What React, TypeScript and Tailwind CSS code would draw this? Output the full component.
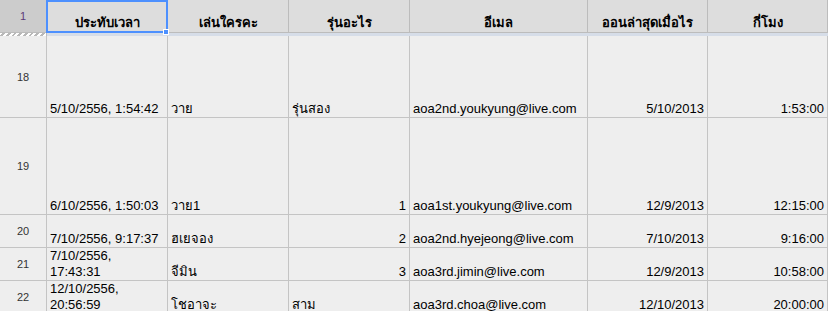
type Cell = { text: string; right?: boolean };

const widths = ['w-[121px]', 'w-[121px]', 'w-[121px]', 'w-[178px]', 'w-[120px]', 'w-[120px]'];

const headers = ['ประทับเวลา', 'เล่นใครคะ', 'รุ่นอะไร', 'อีเมล', 'ออนล่าสุดเมื่อไร', 'กี่โมง'];

const rows: { num: number; height: string; cells: Cell[] }[] = [
  {
    num: 18,
    height: 'h-[82px]',
    cells: [
      { text: '5/10/2556, 1:54:42' },
      { text: 'วาย' },
      { text: 'รุ่นสอง' },
      { text: 'aoa2nd.youkyung@live.com' },
      { text: '5/10/2013', right: true },
      { text: '1:53:00', right: true },
    ],
  },
  {
    num: 19,
    height: 'h-[97px]',
    cells: [
      { text: '6/10/2556, 1:50:03' },
      { text: 'วาย1' },
      { text: '1', right: true },
      { text: 'aoa1st.youkyung@live.com' },
      { text: '12/9/2013', right: true },
      { text: '12:15:00', right: true },
    ],
  },
  {
    num: 20,
    height: 'h-[33px]',
    cells: [
      { text: '7/10/2556, 9:17:37' },
      { text: 'ฮเยจอง' },
      { text: '2', right: true },
      { text: 'aoa2nd.hyejeong@live.com' },
      { text: '7/10/2013', right: true },
      { text: '9:16:00', right: true },
    ],
  },
  {
    num: 21,
    height: 'h-[33px]',
    cells: [
      { text: '7/10/2556,\n17:43:31' },
      { text: 'จีมิน' },
      { text: '3', right: true },
      { text: 'aoa3rd.jimin@live.com' },
      { text: '12/9/2013', right: true },
      { text: '10:58:00', right: true },
    ],
  },
  {
    num: 22,
    height: 'h-[33px]',
    cells: [
      { text: '12/10/2556,\n20:56:59' },
      { text: 'โชอาจะ' },
      { text: 'สาม' },
      { text: 'aoa3rd.choa@live.com' },
      { text: '12/10/2013', right: true },
      { text: '20:00:00', right: true },
    ],
  },
];

export default function App() {
  return (
    <div className="relative w-[828px] h-[311px] overflow-hidden bg-[#eeeeee] font-['Liberation_Sans','Noto_Sans',sans-serif] text-[13px] leading-[16px] text-black">
      {/* header row */}
      <div className="flex h-[33px] bg-[#dddddd]">
        <div className="w-[47px] shrink-0 flex items-center justify-center bg-[#cccccc] border-r border-b border-[#bcbcbc] text-[11px] text-[#5c3a78]">
          1
        </div>
        {headers.map((h, i) => (
          <div
            key={h}
            className={`${widths[i]} shrink-0 flex items-end justify-center border-r border-b border-[#bcbcbc] font-bold pb-[1px] whitespace-nowrap`}
          >
            {h}
          </div>
        ))}
      </div>

      {/* frozen row divider */}
      <div className="flex h-[3px]">
        <div className="w-[47px] shrink-0 border-r border-[#bcbcbc] bg-[repeating-linear-gradient(135deg,#ffffff_0px,#ffffff_2px,#b8b8b8_2px,#b8b8b8_4px)]" />
        <div className="flex-1 bg-[#d6dde8]" />
      </div>

      {/* body rows */}
      {rows.map((r) => (
        <div key={r.num} className={`flex ${r.height}`}>
          <div className="w-[47px] shrink-0 flex items-center justify-center border-r border-b border-[#c4c4c4] text-[11px] text-[#333333]">
            {r.num}
          </div>
          {r.cells.map((c, i) => (
            <div
              key={i}
              className={`${widths[i]} shrink-0 flex flex-col justify-end border-r border-b border-[#c4c4c4] px-[3px] whitespace-pre overflow-hidden ${
                c.right ? 'items-end text-right' : 'items-start text-left'
              }`}
            >
              {c.text}
            </div>
          ))}
        </div>
      ))}

      {/* selected cell A1 */}
      <div className="absolute left-[46px] top-0 w-[122px] h-[33px] border-2 border-[#4d90fe] pointer-events-none" />
      <div className="absolute left-[163px] top-[29px] w-[6px] h-[6px] bg-[#4d90fe] border border-white pointer-events-none" />
    </div>
  );
}
